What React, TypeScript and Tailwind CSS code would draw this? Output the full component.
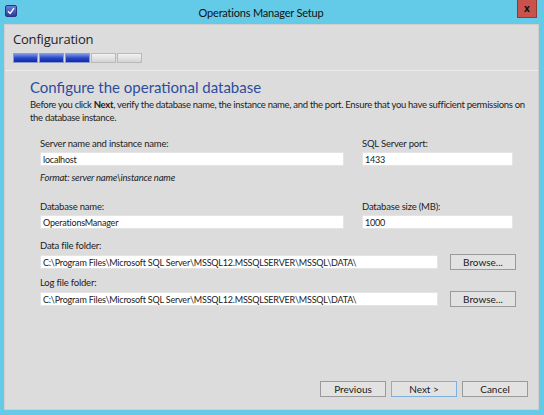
import React from "react";

const lato = { fontFamily: 'Lato, "Open Sans", sans-serif' };
const open = { fontFamily: '"Open Sans", "Noto Sans", sans-serif' };

function TextBox({ value, className }: { value: string; className: string }) {
  return (
    <div
      className={`h-[14px] bg-white border border-[#e4e4e4] flex items-center pl-[2px] text-[9px] text-[#1a1a1a] tracking-[-0.2px] leading-none ${className}`}
    >
      {value}
    </div>
  );
}

function Btn({ label, primary, className }: { label: string; primary?: boolean; className?: string }) {
  return (
    <div
      className={`h-[16px] w-[66px] flex items-center justify-center text-[10px] leading-none text-[#1a1a1a] bg-[#e2e2e2] border ${
        primary ? "border-[#7fb1e0]" : "border-[#9a9a9a]"
      } ${className ?? ""}`}
    >
      {label}
    </div>
  );
}

const label = "text-[9.5px] leading-[12px] text-[#1c1c1c] tracking-[-0.2px]";

export default function App() {
  return (
    <div className="w-[544px] h-[415px] bg-[#63cbe8] flex flex-col overflow-hidden" style={lato}>
      {/* title bar */}
      <div className="h-[24px] relative flex items-center justify-center shrink-0 pr-[22px]">
        <div className="absolute left-[5px] top-[5px] w-[12px] h-[12px] rounded-[2px] bg-gradient-to-b from-[#6d7fd8] to-[#2b3d9a] border border-[#2a3480] flex items-center justify-center">
          <svg width="8" height="8" viewBox="0 0 8 8">
            <path d="M1 4.2 L3.2 6.4 L7 1.2" stroke="#ffffff" strokeWidth="1.4" fill="none" />
          </svg>
        </div>
        <span className="text-[11px] text-[#111] tracking-[-0.2px] mt-[2px]">Operations Manager Setup</span>
        <div className="absolute left-[517px] top-0 w-[20px] h-[18px] bg-[#c9534b] border border-[#8e3a35] border-t-0 flex items-center justify-center">
          <span className="text-[10px] font-bold text-[#111] leading-none -mt-[2px]" style={open}>x</span>
        </div>
      </div>

      {/* client */}
      <div className="flex-1 ml-[4px] mr-[5px] mb-[5px] bg-[#dcdcdc] border border-[#cfcfcf] flex flex-col">
        {/* header */}
        <div className="h-[46px] pl-[8px] pt-[6px] border-b border-[#ececec] shrink-0">
          <div className="text-[13px] text-[#1e1e1e] leading-[16px] tracking-[-0.2px]" style={open}>Configuration</div>
          <div className="mt-[6px] flex gap-[1px] h-[10px] w-[130px]">
            {[0, 1, 2].map((i) => (
              <div key={i} className="w-[25px] h-full bg-gradient-to-b from-[#7d93e6] via-[#2a46c8] to-[#0f2aa0] border border-[#8d9bcf]" />
            ))}
            {[3, 4].map((i) => (
              <div key={i} className="w-[25px] h-full bg-gradient-to-b from-[#f2f2f2] to-[#d4d4d4] border border-[#b9b9b9]" />
            ))}
          </div>
        </div>

        {/* body */}
        <div className="flex-1 pl-[25px] pr-[6px] flex flex-col">
          <div className="mt-[6px] text-[15px] leading-[20px] text-[#2c4d9e]">
            Configure the operational database
          </div>
          <div className="mt-[1px] text-[9.5px] leading-[13px] text-[#1c1c1c] tracking-[-0.3px] whitespace-nowrap">
            Before you click <b>Next</b>, verify the database name, the instance name, and the port. Ensure that you have sufficient permissions on
            <br />
            the database instance.
          </div>

          <div className="pl-[10px] mt-[14px] flex flex-col">
            <div className="flex">
              <div className="w-[322px]">
                <div className={label}>Server name and instance name:</div>
                <TextBox value="localhost" className="mt-[2px] w-[304px]" />
                <div className={`mt-[6px] italic ${label}`}>Format: server name\instance name</div>
              </div>
              <div>
                <div className={label}>SQL Server port:</div>
                <TextBox value="1433" className="mt-[2px] w-[151px]" />
              </div>
            </div>

            <div className="flex mt-[17px]">
              <div className="w-[322px]">
                <div className={label}>Database name:</div>
                <TextBox value="OperationsManager" className="mt-[2px] w-[304px] border-[#c8dcef]" />
              </div>
              <div>
                <div className={label}>Database size (MB):</div>
                <TextBox value="1000" className="mt-[2px] w-[151px]" />
              </div>
            </div>

            <div className={`mt-[11px] ${label}`}>Data file folder:</div>
            <div className="mt-[2px] flex items-center">
              <TextBox value="C:\Program Files\Microsoft SQL Server\MSSQL12.MSSQLSERVER\MSSQL\DATA\" className="w-[398px]" />
              <Btn label="Browse..." className="ml-[12px]" />
            </div>

            <div className={`mt-[7px] ${label}`}>Log file folder:</div>
            <div className="mt-[2px] flex items-center">
              <TextBox value="C:\Program Files\Microsoft SQL Server\MSSQL12.MSSQLSERVER\MSSQL\DATA\" className="w-[398px]" />
              <Btn label="Browse..." className="ml-[12px]" />
            </div>
          </div>

          <div className="mt-auto mb-[12px] flex justify-end gap-[5px] pr-[4px]">
            <Btn label="Previous" />
            <Btn label="Next >" primary />
            <Btn label="Cancel" />
          </div>
        </div>
      </div>
    </div>
  );
}
